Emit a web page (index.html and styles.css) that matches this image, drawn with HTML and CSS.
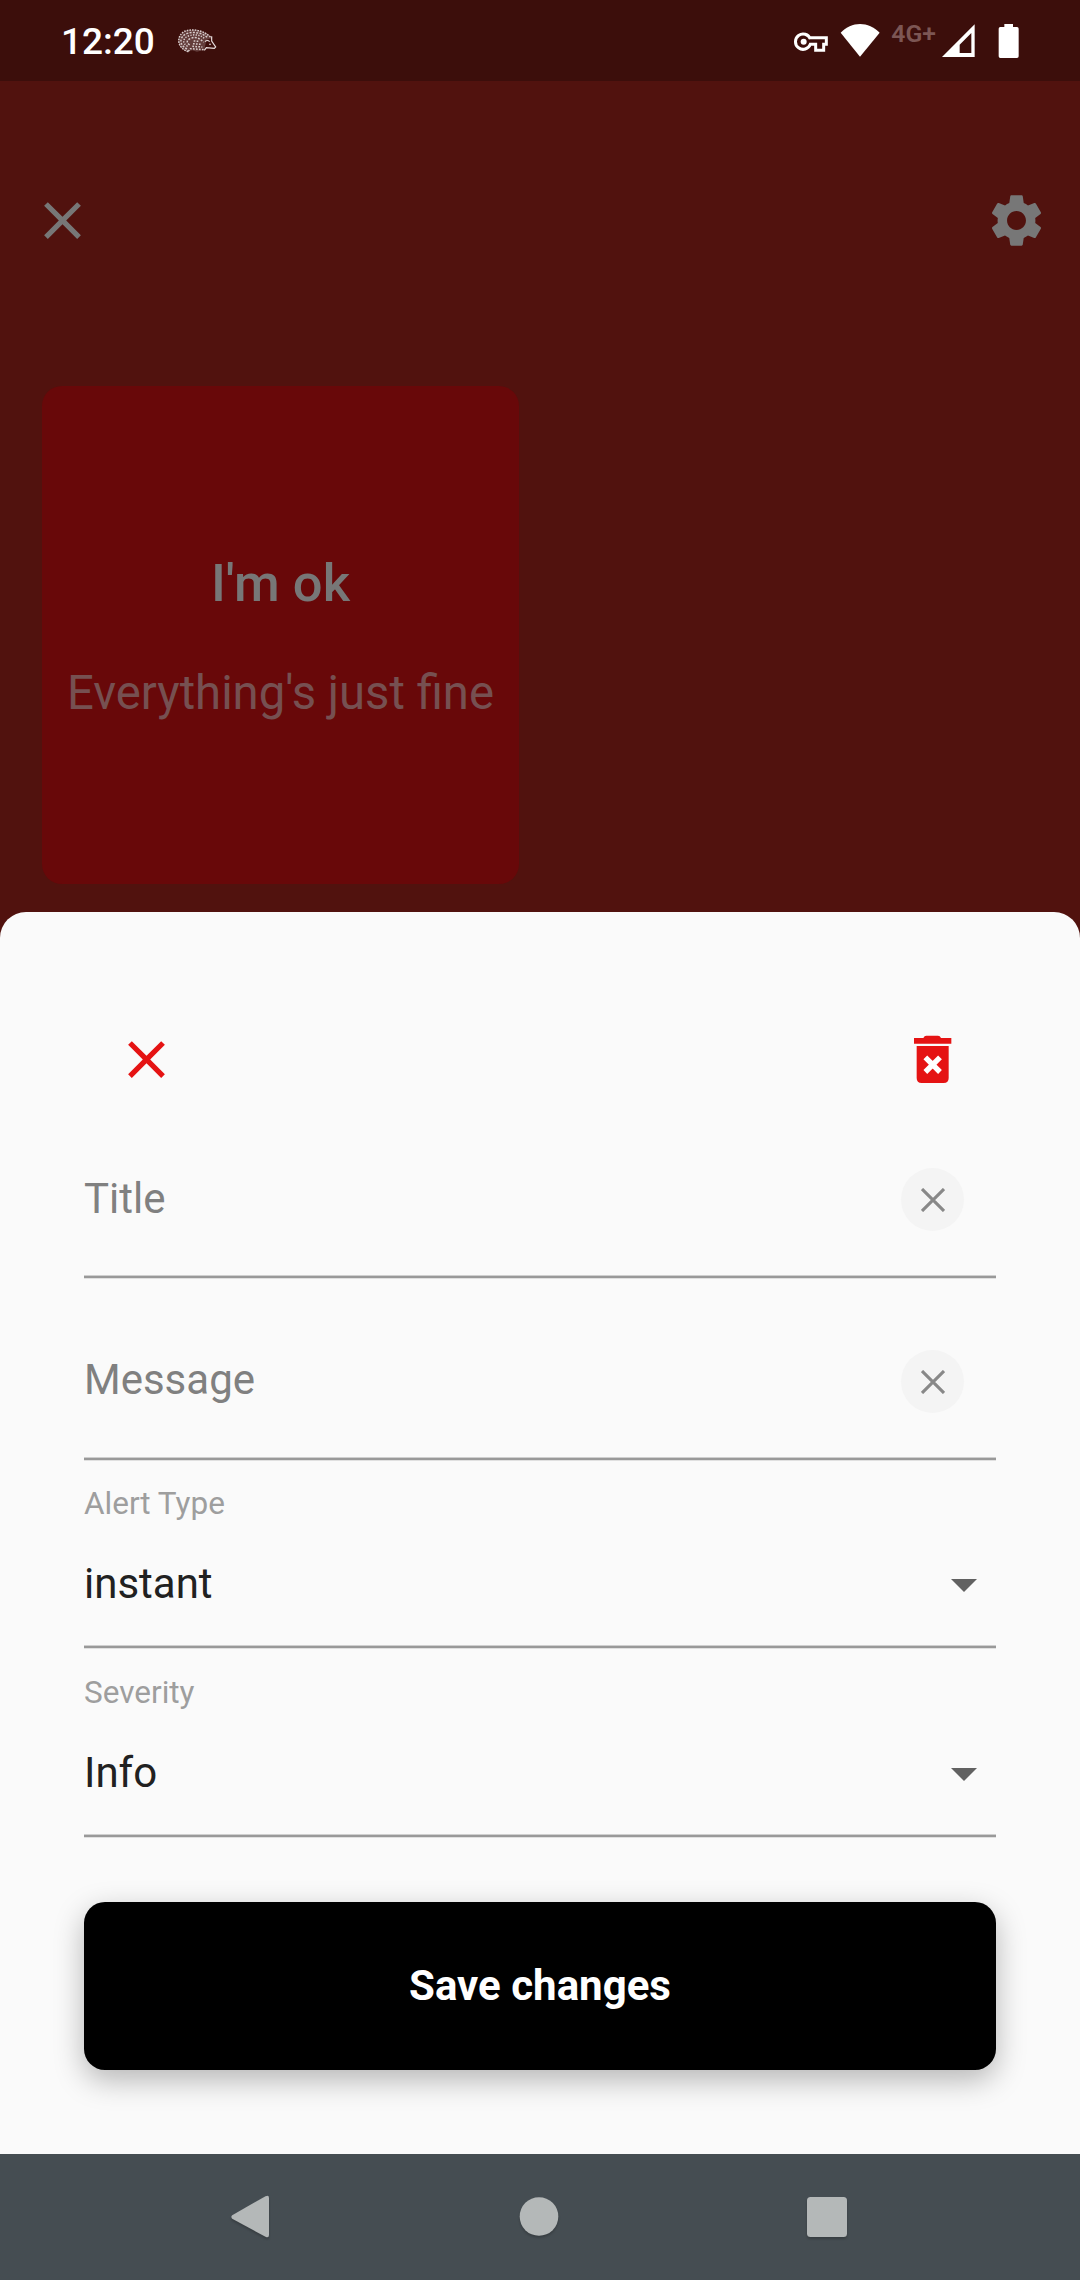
FILE: index.html
```html
<!DOCTYPE html>
<html lang="en">
<head>
<meta charset="utf-8">
<title>Edit alert</title>
<link rel="stylesheet" href="styles.css">
</head>
<body>
<div class="screen">
  <header class="status">
    <span class="clock">12:20</span>
    <svg class="hedgehog" viewBox="0 0 120 72" width="40" height="24">
      <path fill="#d8cccc" fill-opacity=".25" d="M30 68C-2 56-2 22 22 8C50-2 86 4 104 26L88 34L82 62L60 68L46 64Z"/>
      <g fill="none" stroke="#d8cccc" stroke-width="4.5">
        <path stroke-dasharray="5 3" d="M34 68C-2 56-2 22 22 7C50-2 82 4 104 28"/>
        <path stroke-dasharray="6 4" d="M30 60C4 46 8 24 28 14C52 6 76 12 92 26"/>
        <path stroke-dasharray="4 4" d="M32 52C14 42 18 28 34 21C54 14 72 18 84 30"/>
        <path stroke-dasharray="6 4" d="M38 48C26 40 30 32 42 28C56 22 66 26 80 40"/>
        <path stroke-dasharray="5 4" d="M34 67L40 59L80 62M46 52L76 54M48 44L72 46M50 36L68 37"/>
      </g>
      <path fill="none" stroke="#e8dede" stroke-width="3.5" d="M104 22V36L116 54L112 58L88 56L82 64M84 38C88 34 94 34 98 38"/>
      <circle cx="99" cy="46" r="2.5" fill="#e8dede"/>
    </svg>
    <svg class="tray" viewBox="0 0 690 120" width="230" height="40">
      <g transform="translate(-40 -60)">
        <path fill="none" stroke="#fff" stroke-width="9" d="M92 114A23 23 0 1 0 92 130H108V148H132V130H140V110H92Z"/>
        <circle cx="72" cy="122" r="9" fill="#fff"/>
        <path fill="#fff" d="M183 95C215 60 267 60 300 95L241 167Z"/>
        <path fill="#fff" fill-rule="evenodd" d="M585 70V168H487ZM575 96L540 131V156H575Z"/>
        <path fill="#fff" d="M674 69H700V78H712Q717 78 717 83V166Q717 171 712 171H662Q657 171 657 166V83Q657 78 662 78H674Z"/>
        <text class="network" x="335" y="122" textLength="134" lengthAdjust="spacingAndGlyphs">4G+</text>
      </g>
    </svg>
  </header>

  <main class="backdrop">
    <div class="topbar">
      <svg viewBox="0 0 24 24" width="63" height="63"><path fill="#777" d="M19 6.41 17.59 5 12 10.59 6.41 5 5 6.41 10.59 12 5 17.59 6.41 19 12 13.41 17.59 19 19 17.59 13.41 12z"/></svg>
      <svg viewBox="0 0 24 24" width="63" height="63"><path fill="#777" d="M19.14 12.94c.04-.3.06-.61.06-.94 0-.32-.02-.64-.07-.94l2.03-1.58c.18-.14.23-.41.12-.61l-1.92-3.32c-.12-.22-.37-.29-.59-.22l-2.39.96c-.5-.38-1.03-.7-1.62-.94l-.36-2.54c-.04-.24-.24-.41-.48-.41h-3.84c-.24 0-.43.17-.47.41l-.36 2.54c-.59.24-1.13.57-1.62.94l-2.39-.96c-.22-.08-.47 0-.59.22L2.74 8.87c-.12.21-.08.47.12.61l2.03 1.58c-.05.3-.09.63-.09.94s.02.64.07.94l-2.03 1.58c-.18.14-.23.41-.12.61l1.92 3.32c.12.22.37.29.59.22l2.39-.96c.5.38 1.03.7 1.62.94l.36 2.54c.05.24.24.41.48.41h3.84c.24 0 .44-.17.47-.41l.36-2.54c.59-.24 1.13-.56 1.62-.94l2.39.96c.22.08.47 0 .59-.22l1.92-3.32c.12-.22.07-.47-.12-.61l-2.01-1.58zM12 15.6c-1.98 0-3.6-1.62-3.6-3.6s1.62-3.6 3.6-3.6 3.6 1.62 3.6 3.6-1.62 3.6-3.6 3.6z"/></svg>
    </div>
    <article class="card">
      <h1 class="card-title">I'm ok</h1>
      <p class="card-text">Everything's just fine</p>
    </article>
  </main>

  <section class="sheet">
    <div class="sheet-bar">
      <svg viewBox="0 0 24 24" width="63" height="63"><path fill="#e51313" d="M19 6.41 17.59 5 12 10.59 6.41 5 5 6.41 10.59 12 5 17.59 6.41 19 12 13.41 17.59 19 19 17.59 13.41 12z"/></svg>
      <svg viewBox="0 0 189 189" width="63" height="63">
        <path fill="#e51313" d="M39 30H67Q70 23 76 23H111Q117 23 120 30H151V47H39ZM47 54H143V150Q143 165 128 165H62Q47 165 47 150Z"/>
        <path stroke="#fff" stroke-width="16" d="M73 88L117 132M117 88L73 132"/>
      </svg>
    </div>

    <div class="field">
      <div class="input-row">
        <span class="placeholder">Title</span>
        <span class="clear"><svg viewBox="0 0 24 24" width="24" height="24"><path stroke="#888" stroke-width="3.1" d="M1 1L23 23M23 1L1 23"/></svg></span>
      </div>
    </div>
    <div class="field field-next">
      <div class="input-row">
        <span class="placeholder">Message</span>
        <span class="clear"><svg viewBox="0 0 24 24" width="24" height="24"><path stroke="#888" stroke-width="3.1" d="M1 1L23 23M23 1L1 23"/></svg></span>
      </div>
    </div>
    <div class="field select">
      <span class="label">Alert Type</span>
      <div class="select-row"><span>instant</span><svg viewBox="0 0 26 13" width="26" height="13"><path fill="#616161" d="M0 0H26L13 13Z"/></svg></div>
    </div>
    <div class="field select select-next">
      <span class="label">Severity</span>
      <div class="select-row"><span>Info</span><svg viewBox="0 0 26 13" width="26" height="13"><path fill="#616161" d="M0 0H26L13 13Z"/></svg></div>
    </div>
    <button class="save">Save changes</button>
  </section>

  <nav class="nav">
    <svg viewBox="0 0 40 44" width="40" height="44"><path fill="#b4b8b8" d="M1.2 20.3L34.5 1.2Q38 -.5 38 3V40Q38 43.5 34.5 41.8L1.2 23.7Q-.5 22 1.2 20.3Z"/></svg>
    <svg viewBox="0 0 40 40" width="40" height="40"><circle cx="20" cy="19.5" r="19.3" fill="#b4b8b8"/></svg>
    <svg viewBox="0 0 40 40" width="40" height="40"><rect width="40" height="40" rx="3.5" fill="#b4b8b8"/></svg>
  </nav>
</div>
</body>
</html>
```
FILE: styles.css
```css
* { box-sizing: border-box; }
body {
  margin: 0;
  background: #51120e;
  font-family: Roboto, "Liberation Sans", sans-serif;
}
svg { display: block; flex: none; }
.screen {
  width: 1080px;
  height: 2280px;
  display: flex;
  flex-direction: column;
}
.status {
  height: 81px;
  display: flex;
  align-items: center;
  padding: 0 57px 0 61px;
  background: #3c0e0b;
}
.clock {
  width: 116px;
  color: #fff;
  font-size: 37px;
  font-weight: 500;
  line-height: 44px;
  padding-top: 2px;
}
.tray { margin-left: auto; }
.network {
  fill: #7c5654;
  font-size: 73px;
  font-weight: 600;
}
.backdrop { height: 831px; padding: 108px 32px 0 31px; }
.topbar { display: flex; justify-content: space-between; }
.card {
  width: 477px;
  height: 498px;
  margin: 134px 0 0 11px;
  padding-top: 166px;
  border-radius: 20px;
  background: #680809;
  text-align: center;
}
.card-title {
  margin: 0;
  color: #777;
  font-size: 52.5px;
  font-weight: 500;
  line-height: 62px;
}
.card-text {
  margin: 51px 0 0;
  color: #765051;
  font-size: 47.25px;
  line-height: 56px;
  white-space: nowrap;
}
.sheet {
  height: 1242px;
  padding: 116px 84px 0;
  border-radius: 26px 26px 0 0;
  background: #fafafa;
}
.sheet-bar {
  display: flex;
  justify-content: space-between;
  padding: 0 32px 0 31px;
}

/* Each field ends in a soft-edged rule */
.field {
  display: flex;
  flex-direction: column;
  padding-top: 77px;
}
.field::after {
  content: "";
  height: 4px;
  margin-top: 44px;
  background: linear-gradient(#cfcfcf 25%, #999 25% 75%, #e0e0e0 75%);
}
.field-next { padding-top: 71px; }
.input-row {
  height: 63px;
  display: flex;
  justify-content: space-between;
  padding-right: 32px;
}
.placeholder {
  color: #808080;
  font-size: 42px;
  line-height: 61px;
}
.field-next .placeholder { line-height: 59px; }
.clear {
  width: 63px;
  height: 63px;
  display: grid;
  place-items: center;
  border-radius: 50%;
  background: #f4f4f4;
}
.select { padding-top: 25px; }
.select::after { margin-top: 30px; }
.select-next { padding-top: 26px; }
.label {
  color: #9e9e9e;
  font-size: 31.5px;
  line-height: 36px;
}
.select-row {
  height: 63px;
  margin-top: 30px;
  display: flex;
  align-items: center;
  justify-content: space-between;
  padding-right: 19px;
  color: #212121;
  font-size: 42px;
  line-height: 59px;
}
.select-row svg { margin-top: 4px; }
.save {
  display: block;
  width: 912px;
  height: 168px;
  margin: 64px 0 0;
  border: 0;
  border-radius: 21px;
  background: #000;
  box-shadow: 0 10px 30px rgba(0, 0, 0, .28);
  color: #fff;
  font: 700 42px/50px Roboto, "Liberation Sans", sans-serif;
}
.nav {
  height: 126px;
  display: flex;
  justify-content: space-between;
  align-items: center;
  padding: 0 233px 0 231px;
  background: #454d52;
}
.nav svg { filter: drop-shadow(0 2px 1px rgba(0, 0, 0, .2)); }
```
